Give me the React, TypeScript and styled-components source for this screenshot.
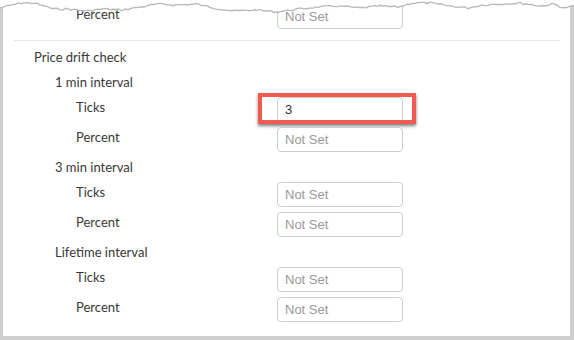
import React from 'react'
import styled, { createGlobalStyle } from 'styled-components'

const GlobalStyle = createGlobalStyle`
  body {
    margin: 0;
    background: #ffffff;
    font-family: 'Lato', 'Liberation Sans', sans-serif;
  }
`

const Page = styled.div`
  position: relative;
  width: 574px;
  height: 340px;
  overflow: hidden;
  background: #ffffff;
`

const Frame = styled.div`
  box-sizing: border-box;
  height: 340px;
  border-left: 3px solid #cfcfcf;
  border-right: 4px solid #cfcfcf;
  border-bottom: 4px solid #cfcfcf;
  padding: 2px 10px 0 11px;
`

const Row = styled.div`
  display: grid;
  grid-template-columns: 263px 126px;
  height: 30px;
`

const Label = styled.div<{ $level: number }>`
  padding-left: ${p => p.$level * 21 - 1}px;
  padding-top: 2px;
  line-height: 20px;
  font-size: 13px;
  color: #383838;
`

const Heading = styled.div<{ $level: number }>`
  height: 25px;
  box-sizing: border-box;
  padding-top: 2px;
  padding-left: ${p => p.$level * 21 - 1}px;
  line-height: 20px;
  font-size: 13px;
  color: #383838;
`

const Divider = styled.div`
  height: 1px;
  margin-top: 8px;
  background: #e8e8e8;
`

const Section = styled.div`
  padding-top: 4px;
`

const FieldWrap = styled.div`
  position: relative;
  margin-top: 2px;
  height: 25px;
`

const Field = styled.input`
  box-sizing: border-box;
  width: 126px;
  height: 25px;
  margin: 0;
  padding: 0 7px;
  border: 1px solid #cccccc;
  border-radius: 4px;
  background: #ffffff;
  font-family: 'Liberation Sans', Arial, sans-serif;
  font-size: 13px;
  color: #333333;
  outline: none;

  &::placeholder {
    color: #999999;
  }
`

const Highlight = styled.div`
  position: absolute;
  top: -4px;
  left: -19px;
  right: -13px;
  bottom: -2px;
  border: 4px solid #f05a50;
  box-shadow: 0 2px 3px rgba(0, 0, 0, 0.5);
  pointer-events: none;
`

const Torn = styled.svg`
  position: absolute;
  top: 0;
  left: 0;
`

const keyPoints: [number, number][] = [
  [0, 8], [12, 5], [22, 3], [34, 3], [44, 6], [54, 9], [68, 9], [86, 11],
  [104, 9], [122, 10], [140, 7], [158, 4], [176, 5], [196, 4], [214, 8],
  [234, 11], [256, 10], [278, 12], [298, 9], [318, 7], [338, 6], [360, 8],
  [380, 6], [398, 7], [412, 3], [430, 3], [450, 6], [468, 8], [482, 5],
  [500, 4], [520, 3], [540, 6], [554, 4], [564, 8], [574, 6],
]

const edgePoints = () => {
  let seed = 7
  const rnd = () => {
    seed = (seed * 9301 + 49297) % 233280
    return seed / 233280
  }
  const pts: string[] = []
  for (let i = 0; i < keyPoints.length - 1; i++) {
    const [x0, y0] = keyPoints[i]
    const [x1, y1] = keyPoints[i + 1]
    for (let x = x0; x < x1; x += 3) {
      const t = (x - x0) / (x1 - x0)
      const y = y0 + (y1 - y0) * t + (rnd() - 0.5) * 1.8
      pts.push(`${x},${y.toFixed(1)}`)
    }
  }
  pts.push('574,6')
  return pts
}

const TornEdge = () => {
  const pts = edgePoints()
  return (
    <Torn width="574" height="16" viewBox="0 0 574 16">
      <polygon points={`0,0 574,0 ${[...pts].reverse().join(' ')}`} fill="#ffffff" />
      <polyline points={pts.join(' ')} fill="none" stroke="#b8b8b8" strokeWidth="1.3" />
    </Torn>
  )
}

const Item = ({ label, value, marked }: { label: string; value?: string; marked?: boolean }) => (
  <Row>
    <Label $level={3}>{label}</Label>
    <FieldWrap>
      <Field readOnly placeholder="Not Set" defaultValue={value} />
      {marked && <Highlight />}
    </FieldWrap>
  </Row>
)

export default function App() {
  return (
    <Page>
      <GlobalStyle />
      <Frame>
        <Item label="Percent" />
        <Divider />
        <Section>
          <Heading $level={1}>Price drift check</Heading>
          <Heading $level={2}>1 min interval</Heading>
          <Item label="Ticks" value="3" marked />
          <Item label="Percent" />
          <Heading $level={2}>3 min interval</Heading>
          <Item label="Ticks" />
          <Item label="Percent" />
          <Heading $level={2}>Lifetime interval</Heading>
          <Item label="Ticks" />
          <Item label="Percent" />
        </Section>
      </Frame>
      <TornEdge />
    </Page>
  )
}
